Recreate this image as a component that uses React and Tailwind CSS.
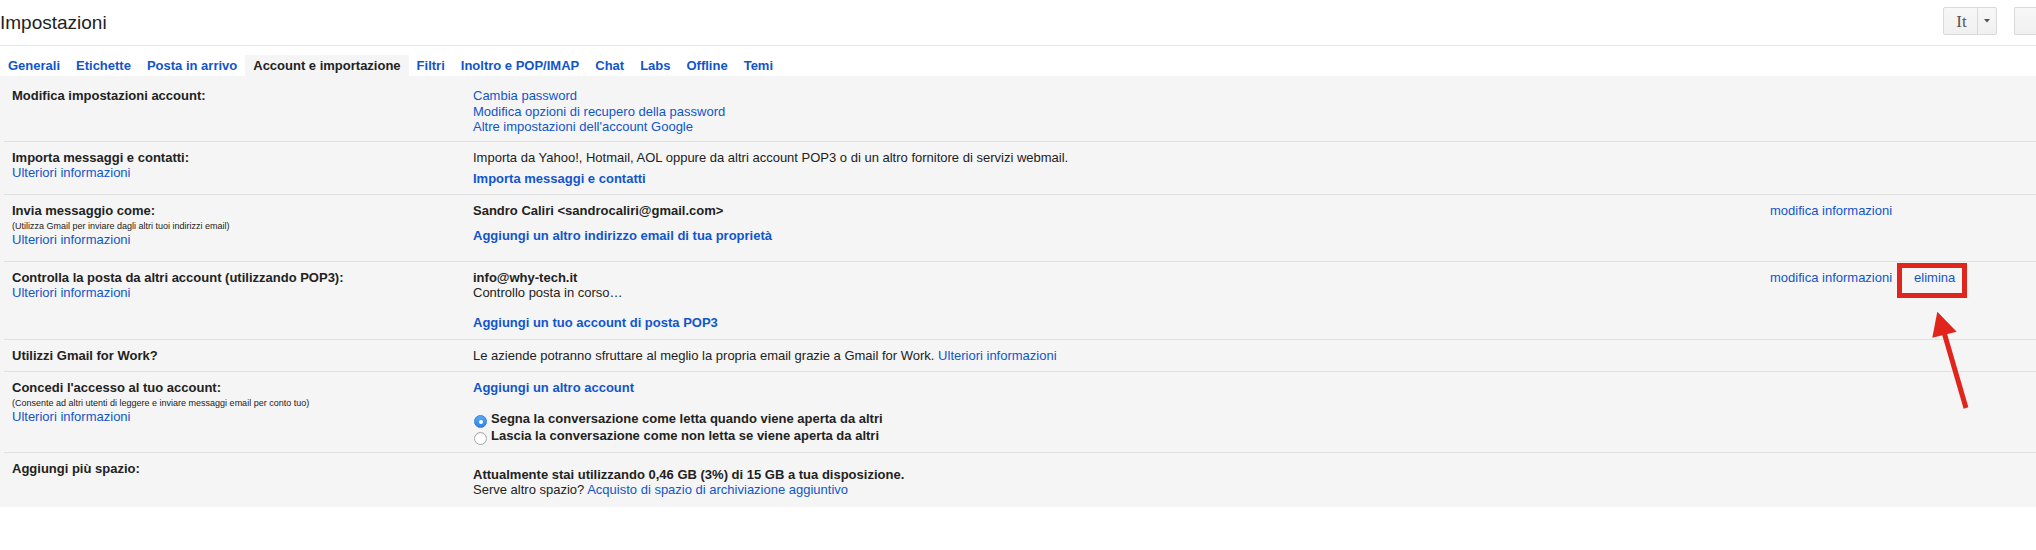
export default function App() {
  const link = "text-[#1155cc] cursor-pointer";
  const tabs = [
    "Generali",
    "Etichette",
    "Posta in arrivo",
    "Account e importazione",
    "Filtri",
    "Inoltro e POP/IMAP",
    "Chat",
    "Labs",
    "Offline",
    "Temi",
  ];

  return (
    <div className="relative min-h-[550px] w-full overflow-hidden bg-white font-['Liberation_Sans',Arial,sans-serif] text-[13px] text-[#222]">
      {/* Header */}
      <div className="flex h-[46px] items-start justify-between border-b border-[#e5e5e5]">
        <h1 className="self-center text-[19px] font-normal leading-[24px] text-[#222]">Impostazioni</h1>
        <div className="mt-[7px] flex gap-[17px]">
          <div className="flex h-[28px] w-[54px] rounded-[2px] border border-[#d9d9d9] bg-gradient-to-b from-[#f7f7f7] to-[#f0f0f0]">
            <div className="flex w-[34px] items-center justify-center border-r border-[#d9d9d9] pl-[2px] font-['Liberation_Serif',serif] text-[17px] leading-none text-[#555]">
              It
            </div>
            <div className="flex flex-1 items-center justify-center">
              <svg width="6" height="4" viewBox="0 0 6 4">
                <path d="M0 0 L6 0 L3 3.5 Z" fill="#555" />
              </svg>
            </div>
          </div>
          <div className="h-[28px] w-[22px] rounded-l-[2px] border border-r-0 border-[#d9d9d9] bg-gradient-to-b from-[#f7f7f7] to-[#f0f0f0]" />
        </div>
      </div>

      {/* Tabs */}
      <div className="flex h-[30px] items-end">
        {tabs.map((t) => {
          const active = t === "Account e importazione";
          return (
            <div
              key={t}
              className={
                active
                  ? "h-[21px] bg-[#f5f5f5] px-2 font-bold leading-[21px] text-[#222]"
                  : "h-[21px] px-2 font-bold leading-[21px] text-[#1155cc]"
              }
            >
              {t}
            </div>
          );
        })}
      </div>

      {/* Settings table */}
      <div className="bg-[#f5f5f5] leading-[15px]">
        {/* Modifica impostazioni account */}
        <div className="ml-[4px] flex h-[65px] pt-[12px]">
          <div className="w-[469px] shrink-0 pl-2 font-bold">Modifica impostazioni account:</div>
          <div className="flex w-[1297px] shrink-0 flex-col leading-[15.5px]">
            <span className={link}>Cambia password</span>
            <span className={link}>Modifica opzioni di recupero della password</span>
            <span className={link}>Altre impostazioni dell'account Google</span>
          </div>
        </div>

        {/* Importa messaggi e contatti */}
        <div className="ml-[4px] flex h-[53px] border-t border-[#e0e0e0] pt-2">
          <div className="w-[469px] shrink-0 pl-2">
            <div className="font-bold">Importa messaggi e contatti:</div>
            <div className={link}>Ulteriori informazioni</div>
          </div>
          <div className="w-[1297px] shrink-0">
            <div>Importa da Yahoo!, Hotmail, AOL oppure da altri account POP3 o di un altro fornitore di servizi webmail.</div>
            <div className={"mt-[6px] font-bold " + link}>Importa messaggi e contatti</div>
          </div>
        </div>

        {/* Invia messaggio come */}
        <div className="ml-[4px] flex h-[67px] border-t border-[#e0e0e0] pt-2">
          <div className="w-[469px] shrink-0 pl-2">
            <div className="font-bold">Invia messaggio come:</div>
            <div className="h-[14px] text-[9px] leading-[16px]">(Utilizza Gmail per inviare dagli altri tuoi indirizzi email)</div>
            <div className={link}>Ulteriori informazioni</div>
          </div>
          <div className="w-[1297px] shrink-0">
            <div className="font-bold">Sandro Caliri &lt;sandrocaliri@gmail.com&gt;</div>
            <div className={"mt-[10px] font-bold " + link}>Aggiungi un altro indirizzo email di tua proprietà</div>
          </div>
          <div className="flex">
            <span className={link}>modifica informazioni</span>
          </div>
        </div>

        {/* Controlla la posta da altri account */}
        <div className="ml-[4px] flex h-[78px] border-t border-[#e0e0e0] pt-2">
          <div className="w-[469px] shrink-0 pl-2">
            <div className="font-bold">Controlla la posta da altri account (utilizzando POP3):</div>
            <div className={link}>Ulteriori informazioni</div>
          </div>
          <div className="w-[1297px] shrink-0">
            <div className="font-bold">info@why-tech.it</div>
            <div>Controllo posta in corso…</div>
            <div className={"mt-[15px] font-bold " + link}>Aggiungi un tuo account di posta POP3</div>
          </div>
          <div className="flex">
            <span className={link}>modifica informazioni</span>
            <span className={"relative ml-[22px] " + link}>
              elimina
              <span className="absolute left-[-17px] top-[-7px] h-[35px] w-[70px] border-[5px] border-[#e0261c]" />
            </span>
          </div>
        </div>

        {/* Gmail for Work */}
        <div className="ml-[4px] flex h-[32px] border-t border-[#e0e0e0] pt-2">
          <div className="w-[469px] shrink-0 pl-2 font-bold">Utilizzi Gmail for Work?</div>
          <div className="w-[1297px] shrink-0">
            Le aziende potranno sfruttare al meglio la propria email grazie a Gmail for Work.{" "}
            <span className={link}>Ulteriori informazioni</span>
          </div>
        </div>

        {/* Concedi l'accesso */}
        <div className="ml-[4px] flex h-[81px] border-t border-[#e0e0e0] pt-2">
          <div className="w-[469px] shrink-0 pl-2">
            <div className="font-bold">Concedi l'accesso al tuo account:</div>
            <div className="h-[14px] text-[9px] leading-[16px]">(Consente ad altri utenti di leggere e inviare messaggi email per conto tuo)</div>
            <div className={link}>Ulteriori informazioni</div>
          </div>
          <div className="w-[1297px] shrink-0">
            <div className={"font-bold " + link}>Aggiungi un altro account</div>
            <div className="mt-[15px] flex h-[17px] items-start font-bold leading-[17px]">
              <span className="ml-[1px] mr-[4px] mt-[5px] flex h-[13px] w-[13px] items-center justify-center rounded-full border border-[#2f7fdc] bg-gradient-to-b from-[#5aaaf7] to-[#2d82e6]">
                <span className="h-[4px] w-[4px] rounded-full bg-white" />
              </span>
              Segna la conversazione come letta quando viene aperta da altri
            </div>
            <div className="flex h-[17px] items-start font-bold leading-[17px]">
              <span className="ml-[1px] mr-[4px] mt-[5px] h-[13px] w-[13px] rounded-full border border-[#a9a9a9] bg-white shadow-[inset_0_1px_1px_rgba(0,0,0,0.08)]" />
              Lascia la conversazione come non letta se viene aperta da altri
            </div>
          </div>
        </div>

        {/* Aggiungi più spazio */}
        <div className="ml-[4px] flex h-[55px] border-t border-[#e0e0e0] pt-2">
          <div className="w-[469px] shrink-0 pl-2 font-bold">Aggiungi più spazio:</div>
          <div className="mt-[6px] w-[1297px] shrink-0">
            <div className="font-bold">Attualmente stai utilizzando 0,46 GB (3%) di 15 GB a tua disposizione.</div>
            <div>
              Serve altro spazio? <span className={link}>Acquisto di spazio di archiviazione aggiuntivo</span>
            </div>
          </div>
        </div>
      </div>

      {/* Annotation arrow */}
      <svg className="pointer-events-none absolute left-[1925px] top-[305px]" width="50" height="110" viewBox="0 0 50 110">
        <line x1="41" y1="103" x2="19.5" y2="29" stroke="#e0261c" strokeWidth="5" />
        <polygon points="12.3,6.7 7.3,32.7 31.7,26.7" fill="#e0261c" />
      </svg>
    </div>
  );
}
